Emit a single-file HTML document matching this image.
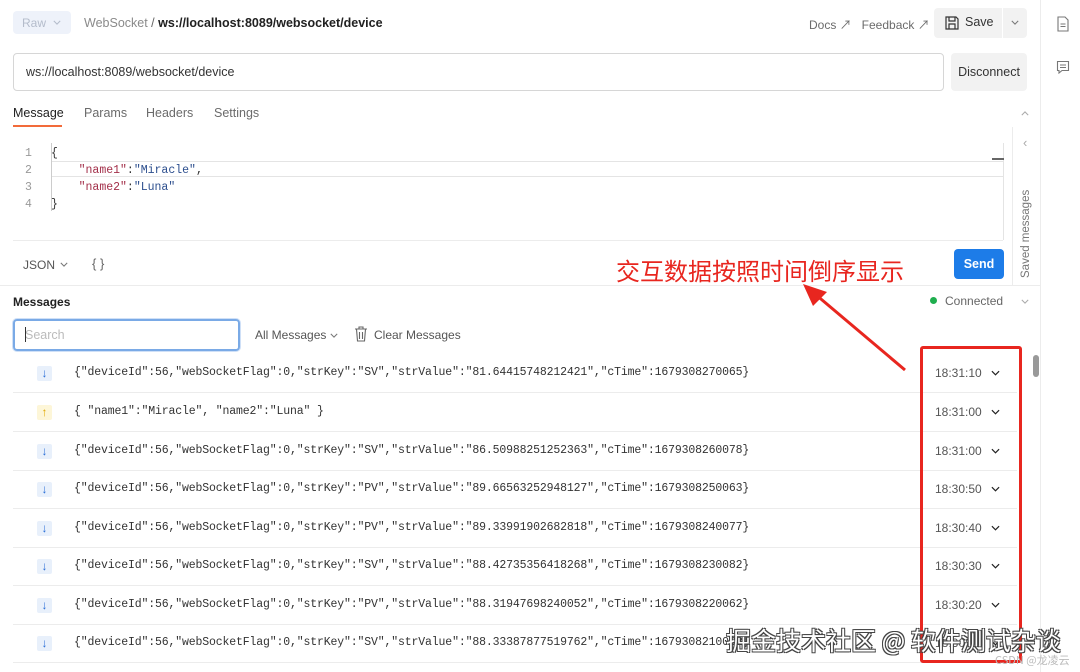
<!DOCTYPE html>
<html><head><meta charset="utf-8"><style>
*{box-sizing:border-box;margin:0;padding:0}
body{width:1080px;height:672px;overflow:hidden;background:#fff;font-family:"Liberation Sans","Noto Sans CJK SC",sans-serif;color:#212121;position:relative;font-size:12px}
.a{position:absolute;white-space:nowrap}
.mono{font-family:"Liberation Mono",monospace;font-size:11.5px;letter-spacing:-0.15px;color:#333}
.row{position:absolute;left:13px;width:1004px;height:39px;border-bottom:1px solid #ececec}
.row .ic{position:absolute;left:24px;top:12px;width:15px;height:15px;border-radius:2px;background:#e8f0fb;color:#2a6fd8;font-size:12px;text-align:center;line-height:15px;font-weight:bold}
.row .ic.up{background:#fdf6d8;color:#e0a800}
.row .t{position:absolute;left:61px;top:12px}
.row .tm{position:absolute;left:922px;top:12px;color:#555;font-size:12px}
.row .cv{position:absolute;left:978px;top:16px}
</style></head><body>
<svg width="0" height="0" style="position:absolute"><defs><symbol id="ch" viewBox="0 0 10 6"><path d="M1 1l4 4 4-4" fill="none" stroke="currentColor" stroke-width="1.3"/></symbol></defs></svg>
<div class="a" style="left:13px;top:11px;width:58px;height:23px;background:#eef2fa;border-radius:4px;color:#b4bccb;font-size:12px;padding:5px 9px">Raw</div>
<svg class="a" style="left:53px;top:20px;color:#b4bccb" width="8" height="5"><use href="#ch"/></svg>
<div class="a" style="left:84px;top:16px;font-size:12.5px;color:#8a8a8a">WebSocket <span style="color:#666">/</span> <b style="color:#212121">ws://localhost:8089/websocket/device</b></div>
<div class="a" style="left:809px;top:16px;color:#6b6b6b;font-size:12px">Docs &#8599;&nbsp;&nbsp;&nbsp;Feedback &#8599;</div>
<div class="a" style="left:934px;top:8px;width:93px;height:30px;background:#f2f2f2;border-radius:4px"></div>
<div class="a" style="left:1002px;top:8px;width:1px;height:30px;background:#fff"></div>
<svg class="a" style="left:944px;top:15px" width="16" height="16" viewBox="0 0 16 16" fill="none" stroke="#333" stroke-width="1.2"><path d="M2 2h10l2 2v10H2z M5 2v4h6V2 M5 14V9h6v5"/></svg>
<div class="a" style="left:965px;top:15px;font-size:12.5px;color:#333">Save</div>
<svg class="a" style="left:1011px;top:20px;color:#777" width="8" height="5"><use href="#ch"/></svg>
<div class="a" style="left:1040px;top:0;width:1px;height:672px;background:#ececec"></div>
<svg class="a" style="left:1056px;top:16px" width="14" height="16" viewBox="0 0 14 16" fill="none" stroke="#777" stroke-width="1.1"><path d="M2 1h7l3 3v11H2z M4.5 8h5 M4.5 10.5h5"/></svg>
<svg class="a" style="left:1056px;top:60px" width="14" height="14" viewBox="0 0 14 14" fill="none" stroke="#777" stroke-width="1.1"><path d="M1.5 1.5h11v9H6l-3 2.5v-2.5H1.5z M4 5h6 M4 7.5h6"/></svg>
<div class="a" style="left:13px;top:53px;width:931px;height:38px;border:1px solid #d6d6d6;border-radius:4px"></div>
<div class="a" style="left:26px;top:65px;font-size:12.5px;color:#333">ws://localhost:8089/websocket/device</div>
<div class="a" style="left:951px;top:53px;width:76px;height:38px;background:#f2f2f2;border-radius:4px;font-size:12.5px;color:#333;padding-top:12px;text-align:center">Disconnect</div>
<div class="a" style="left:13px;top:106px;font-size:12.5px;color:#212121">Message</div>
<div class="a" style="left:13px;top:125px;width:49px;height:2px;background:#f26b3a"></div>
<div class="a" style="left:84px;top:106px;font-size:12.5px;color:#6b6b6b">Params</div>
<div class="a" style="left:146px;top:106px;font-size:12.5px;color:#6b6b6b">Headers</div>
<div class="a" style="left:214px;top:106px;font-size:12.5px;color:#6b6b6b">Settings</div>
<svg class="a" style="left:1021px;top:111px;color:#aaa;transform:rotate(180deg)" width="8" height="5"><use href="#ch"/></svg>
<div class="a" style="left:51px;top:161px;width:953px;height:16px;border-top:1px solid #e4e4e4;border-bottom:1px solid #e4e4e4"></div>
<div class="a" style="left:51px;top:143px;width:1px;height:68px;background:#ccc"></div>
<div class="a" style="left:1003px;top:143px;width:1px;height:97px;background:#e4e4e4"></div>
<div class="a" style="left:992px;top:158px;width:12px;height:2px;background:#666"></div>
<div class="a mono" style="left:25px;top:145px;color:#999;line-height:17px;letter-spacing:0">1<br>2<br>3<br>4</div>
<div class="a mono" style="left:51px;top:145px;line-height:17px;letter-spacing:0">{<br>&nbsp;&nbsp;&nbsp;&nbsp;<span style="color:#a3304a">"name1"</span>:<span style="color:#2d4f8e">"Miracle"</span>,<br>&nbsp;&nbsp;&nbsp;&nbsp;<span style="color:#a3304a">"name2"</span>:<span style="color:#2d4f8e">"Luna"</span><br>}</div>
<div class="a" style="left:1012px;top:127px;width:1px;height:158px;background:#ececec"></div>
<div class="a" style="left:1023px;top:135px;color:#aaa;font-size:13px">&#8249;</div>
<div class="a" style="left:1020px;top:278px;transform:rotate(-90deg);transform-origin:0 0;color:#777;font-size:11.5px">Saved messages</div>
<div class="a" style="left:13px;top:240px;width:990px;height:1px;background:#ececec"></div>
<div class="a" style="left:23px;top:258px;font-size:12px;color:#555">JSON</div>
<svg class="a" style="left:60px;top:262px;color:#777" width="8" height="5"><use href="#ch"/></svg>
<div class="a" style="left:92px;top:256px;font-size:13px;color:#666">{ }</div>
<div class="a" style="left:954px;top:249px;width:50px;height:30px;background:#1d7ce8;border-radius:4px;color:#fff;font-weight:bold;font-size:12.5px;text-align:center;padding-top:8px">Send</div>
<div class="a" style="left:0;top:285px;width:1040px;height:1px;background:#ececec"></div>
<div class="a" style="left:13px;top:295px;font-weight:bold;font-size:12px">Messages</div>
<div class="a" style="left:930px;top:297px;width:7px;height:7px;border-radius:50%;background:#1fae4e"></div>
<div class="a" style="left:945px;top:294px;font-size:12px;color:#666">Connected</div>
<svg class="a" style="left:1021px;top:299px;color:#aaa" width="8" height="5"><use href="#ch"/></svg>
<div class="a" style="left:13px;top:319px;width:227px;height:32px;border:2px solid #7aaae6;border-radius:4px;box-shadow:0 0 0 1px #cfe0f7"></div>
<div class="a" style="left:25px;top:328px;font-size:12.5px;color:#bbb">Search</div>
<div class="a" style="left:25px;top:327px;width:1px;height:15px;background:#333"></div>
<div class="a" style="left:255px;top:328px;font-size:12px;color:#555">All Messages</div>
<svg class="a" style="left:330px;top:333px;color:#777" width="8" height="5"><use href="#ch"/></svg>
<svg class="a" style="left:354px;top:326px" width="14" height="16" viewBox="0 0 14 16" fill="none" stroke="#666" stroke-width="1.1"><path d="M1 3h12 M5 3V1h4v2 M2.5 3l1 12h7l1-12 M5.5 6v7 M8.5 6v7"/></svg>
<div class="a" style="left:374px;top:328px;font-size:12px;color:#555">Clear Messages</div>
<div class="a" style="left:1033px;top:355px;width:6px;height:22px;border-radius:3px;background:#999"></div>
<div class="row" style="top:354px"><div class="ic">&#8595;</div><div class="t mono">{"deviceId":56,"webSocketFlag":0,"strKey":"SV","strValue":"81.64415748212421","cTime":1679308270065}</div><div class="tm">18:31:10</div><svg class="cv" width="9" height="6"><use href="#ch"/></svg></div>
<div class="row" style="top:393px"><div class="ic up">&#8593;</div><div class="t mono">{ "name1":"Miracle", "name2":"Luna" }</div><div class="tm">18:31:00</div><svg class="cv" width="9" height="6"><use href="#ch"/></svg></div>
<div class="row" style="top:432px"><div class="ic">&#8595;</div><div class="t mono">{"deviceId":56,"webSocketFlag":0,"strKey":"SV","strValue":"86.50988251252363","cTime":1679308260078}</div><div class="tm">18:31:00</div><svg class="cv" width="9" height="6"><use href="#ch"/></svg></div>
<div class="row" style="top:470px"><div class="ic">&#8595;</div><div class="t mono">{"deviceId":56,"webSocketFlag":0,"strKey":"PV","strValue":"89.66563252948127","cTime":1679308250063}</div><div class="tm">18:30:50</div><svg class="cv" width="9" height="6"><use href="#ch"/></svg></div>
<div class="row" style="top:509px"><div class="ic">&#8595;</div><div class="t mono">{"deviceId":56,"webSocketFlag":0,"strKey":"PV","strValue":"89.33991902682818","cTime":1679308240077}</div><div class="tm">18:30:40</div><svg class="cv" width="9" height="6"><use href="#ch"/></svg></div>
<div class="row" style="top:547px"><div class="ic">&#8595;</div><div class="t mono">{"deviceId":56,"webSocketFlag":0,"strKey":"SV","strValue":"88.42735356418268","cTime":1679308230082}</div><div class="tm">18:30:30</div><svg class="cv" width="9" height="6"><use href="#ch"/></svg></div>
<div class="row" style="top:586px"><div class="ic">&#8595;</div><div class="t mono">{"deviceId":56,"webSocketFlag":0,"strKey":"PV","strValue":"88.31947698240052","cTime":1679308220062}</div><div class="tm">18:30:20</div><svg class="cv" width="9" height="6"><use href="#ch"/></svg></div>
<div class="row" style="top:624px"><div class="ic">&#8595;</div><div class="t mono">{"deviceId":56,"webSocketFlag":0,"strKey":"SV","strValue":"88.33387877519762","cTime":1679308210062}</div><div class="tm">18:30:10</div><svg class="cv" width="9" height="6"><use href="#ch"/></svg></div>
<div class="a" style="left:920px;top:346px;width:102px;height:317px;border:3px solid #e8261f;border-radius:3px"></div>
<div class="a" style="left:616px;top:252px;font-size:24px;color:#e8261f;font-family:'Noto Sans CJK SC',sans-serif">交互数据按照时间倒序显示</div>
<svg class="a" style="left:795px;top:278px" width="120" height="100"><path d="M110 92 L20 16" stroke="#e8261f" stroke-width="3"/><path d="M8 6 L32 14 L18 28 Z" fill="#e8261f"/></svg>
<div class="a" style="left:726px;top:622px;font-size:25px;color:#fff;font-family:'Noto Sans CJK SC',sans-serif;text-shadow:1px 1px 0 #444,-1px -1px 0 #444,1px -1px 0 #444,-1px 1px 0 #444">掘金技术社区 @ 软件测试杂谈</div>
<div class="a" style="left:995px;top:652px;font-size:11px;color:#bbb;font-family:'Noto Sans CJK SC',sans-serif">CSDN @龙凌云</div>
</body></html>
